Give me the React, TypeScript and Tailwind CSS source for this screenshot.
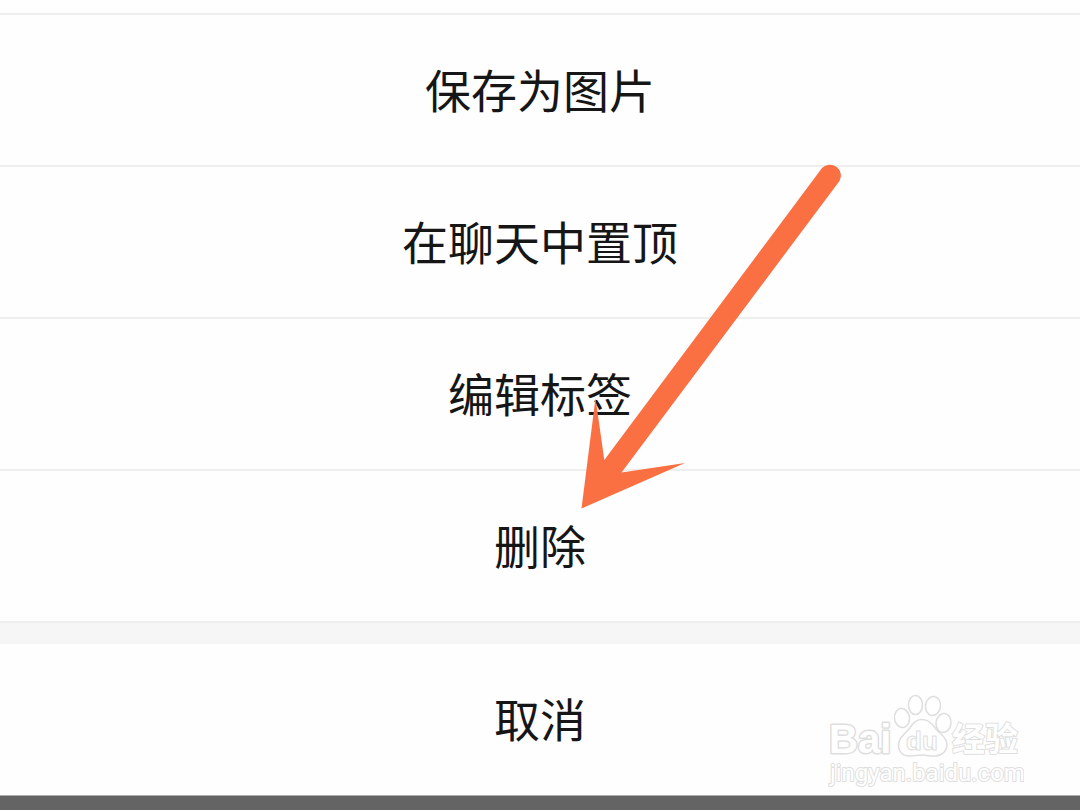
import React from "react";

const actions = [
  { id: "save", label: "保存为图片" },
  { id: "pin", label: "在聊天中置顶" },
  { id: "tags", label: "编辑标签" },
  { id: "delete", label: "删除" },
];

function SheetButton({ label }: { label: string }) {
  return (
    <button
      type="button"
      className="w-full h-[150px] pb-1 flex items-center justify-center text-[46px] leading-none text-[#161616] cursor-pointer"
    >
      {label}
    </button>
  );
}

// Pointer drawn over the sheet, aimed at the delete row
function Arrow() {
  return (
    <svg
      className="absolute top-40 left-1/2 ml-10 pointer-events-none"
      width="264"
      height="352"
      viewBox="580 160 264 352"
      fill="#fa7042"
      aria-hidden="true"
    >
      <path d="M581.500 508.500L595.500 398L604.300 460L822 168A11 11 0 0 1 839.500 181L621.500 472.500L685 463Z" />
    </svg>
  );
}

function Watermark() {
  return (
    <svg
      className="absolute right-14 bottom-5 pointer-events-none"
      width="200"
      height="100"
      viewBox="824 690 200 100"
      fill="#ffffff"
      stroke="#dedede"
      strokeLinejoin="round"
    >
      <g strokeWidth="1.5">
        <ellipse cx="902" cy="718" rx="7.500" ry="9.500" transform="rotate(-8 902 718)" />
        <ellipse cx="915.500" cy="705" rx="7" ry="9.500" />
        <ellipse cx="933" cy="706" rx="7.500" ry="9.500" transform="rotate(8 933 706)" />
        <ellipse cx="943.500" cy="723" rx="7.500" ry="9.500" transform="rotate(8 943.500 723)" />
        <path d="M922 719.500C915 719.500 912 725 909 729C905 734 898 738 898.500 746C899 753 904 756.500 911 756C916 755.500 919 755 923 755C927 755 930 756.500 935 756C942 755.500 947 751 947 744C946.500 737 940 734 936 729C932 724 929 719.500 922 719.500Z" />
      </g>
      <text
        x="829"
        y="753"
        fontSize="40"
        fontWeight="700"
        strokeWidth="3"
        paintOrder="stroke"
        className="font-['Liberation_Sans']"
      >
        Bai
      </text>
      <text x="906" y="750" fontSize="26" fontWeight="700" className="font-['Liberation_Sans']">
        du
      </text>
      <text
        x="952"
        y="751"
        fontSize="33"
        fontWeight="700"
        strokeWidth="2"
        paintOrder="stroke"
        className="font-['Noto_Sans_CJK_SC']"
      >
        经验
      </text>
      <text
        x="830"
        y="781"
        fontSize="24"
        strokeWidth="2"
        paintOrder="stroke"
        className="font-['Roboto']"
      >
        jingyan.baidu.com
      </text>
    </svg>
  );
}

export default function App() {
  return (
    <div className="relative min-h-screen flex flex-col overflow-hidden bg-[#fefefe] font-['Noto_Sans_CJK_SC',sans-serif]">
      <div className="h-[13px]" />
      <ul>
        {actions.map((action) => (
          <li key={action.id} className="border-t-2 border-[#eeeeee]">
            <SheetButton label={action.label} />
          </li>
        ))}
      </ul>

      {/* Gap between the actions and cancel */}
      <div className="h-[23px] border-t-2 border-[#eeeeee] bg-[#f6f6f6]" />
      <SheetButton label="取消" />

      {/* System bar */}
      <div className="flex-1 mt-px border-t border-[#a8acab] bg-[#646464]" />

      <Arrow />
      <Watermark />
    </div>
  );
}
